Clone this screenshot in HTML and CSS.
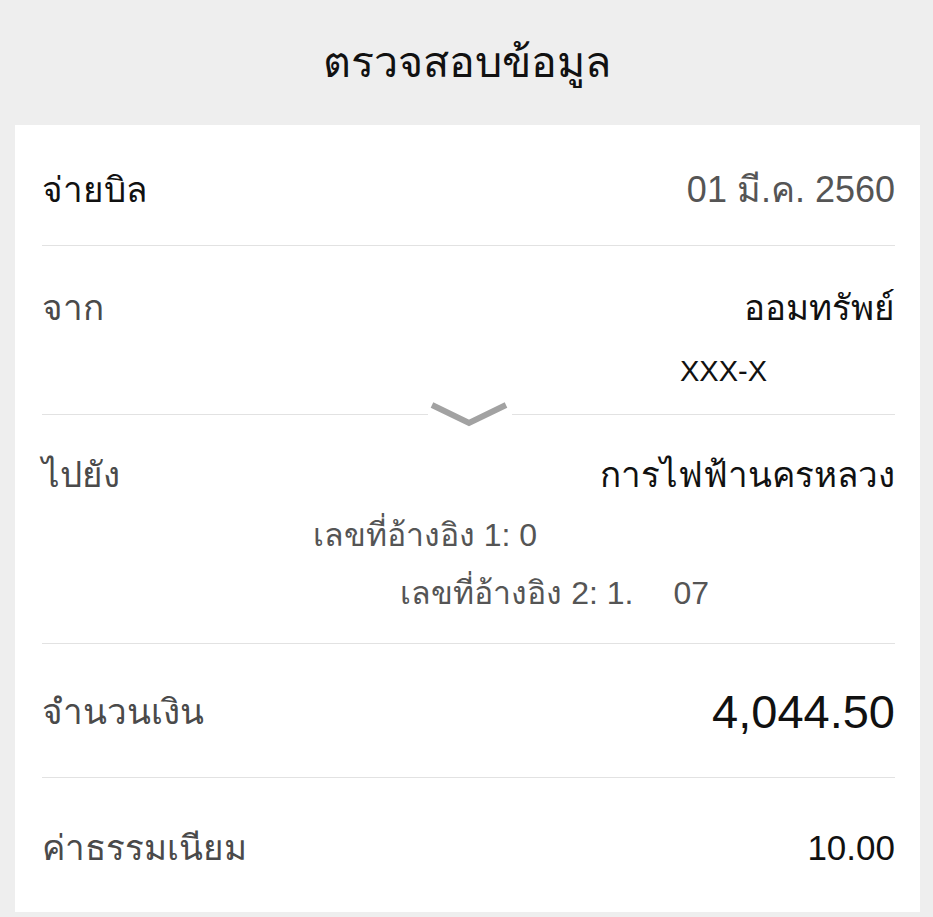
FILE: index.html
```html
<!DOCTYPE html>
<html lang="th">
<head>
  <meta charset="UTF-8">
  <meta name="viewport" content="width=device-width, initial-scale=1.0">
  <title>ตรวจสอบข้อมูล</title>

  <link rel="stylesheet" href="styles.css">
</head>
<body>
  <h1 class="title">ตรวจสอบข้อมูล</h1>

  <div class="card">
    <div class="row row-bill">
      <span class="label label-dark">จ่ายบิล</span>
      <span class="value value-date">01 มี.ค. 2560</span>
    </div>

    <div class="row row-from">
      <span class="label">จาก</span>
      <div class="values">
        <span class="value">ออมทรัพย์</span>
        <span class="value value-account">XXX-X<span class="mask mask-account"></span></span>
      </div>
      <!-- expand arrow sits on the divider -->
      <svg class="chevron" width="84" height="32" viewBox="0 0 84 32">
        <polyline points="4,7 41,25 78,7" fill="none" stroke="#a2a2a2" stroke-width="6" />
      </svg>
    </div>

    <div class="row row-to">
      <span class="label">ไปยัง</span>
      <div class="values">
        <span class="value">การไฟฟ้านครหลวง</span>
        <span class="value value-ref">เลขที่อ้างอิง 1: 0<span class="mask mask-ref1"></span></span>
        <span class="value value-ref">เลขที่อ้างอิง 2: 1.<span class="mask mask-gap"></span>07<span class="mask mask-ref2"></span></span>
      </div>
    </div>

    <div class="row row-amount">
      <span class="label">จำนวนเงิน</span>
      <span class="value value-big">4,044.50</span>
    </div>

    <div class="row row-fee">
      <span class="label">ค่าธรรมเนียม</span>
      <span class="value value-fee">10.00</span>
    </div>
  </div>
</body>
</html>
```

FILE: styles.css
```css
body {
  margin: 0;
  background-color: #eeeeee;
  font-family: "Liberation Sans", "Noto Sans", Arial, sans-serif;
  color: #111;
}

.title {
  margin: 0;
  height: 125px;
  line-height: 125px;
  text-align: center;
  font-size: 43px;
  font-weight: normal;
  color: #111;
}

.card {
  background-color: #fff;
  margin: 0 13px 0 15px;
  padding: 0 25px 0 27px;
}

.row {
  display: flex;
  justify-content: space-between;
  align-items: flex-start;
  border-bottom: 1px solid #e2e2e2;
  position: relative;
}

.label {
  font-size: 35px;
  line-height: 40px;
  color: #4a4a4a;
}

.label-dark {
  color: #111;
}

.values {
  display: flex;
  flex-direction: column;
  align-items: flex-end;
}

.value {
  font-size: 35px;
  line-height: 40px;
  color: #111;
  white-space: nowrap;
}

.value-date {
  font-size: 36px;
  color: #555;
}

.value-account {
  font-size: 29px;
  margin-top: 23px;
}

.value-ref {
  font-size: 32px;
  color: #555;
  margin-top: 20px;
}

.value-ref + .value-ref {
  margin-top: 18px;
}

/* blanked-out account and reference digits */
.mask {
  display: inline-block;
}

.mask-account {
  width: 128px;
}

.mask-ref1 {
  width: 358px;
}

.mask-gap {
  width: 40px;
}

.mask-ref2 {
  width: 186px;
}

.value-big {
  font-size: 47px;
  line-height: 56px;
}

.value-fee {
  font-size: 35px;
}

.row-bill {
  padding: 45px 0 35px;
}

.row-from {
  padding: 42px 0 23px;
}

.row-to {
  padding: 40px 0 30px;
}

.row-amount {
  padding: 40px 0 37px;
}

.row-amount .label {
  line-height: 56px;
}

.row-fee {
  padding: 50px 0 44px;
  border-bottom: none;
}

.chevron {
  position: absolute;
  left: 386px;
  bottom: -16px;
  background-color: #fff;
}
```
